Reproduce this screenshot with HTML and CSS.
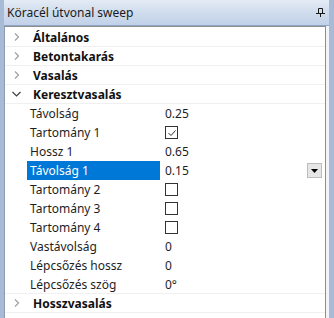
FILE: index.html
```html
<!DOCTYPE html>
<html lang="hu">
<head>
    <meta charset="UTF-8">
    <title>Köracél útvonal sweep</title>
    <link rel="stylesheet" href="styles.css">
</head>
<body>
    <div class="frame">
        <div class="titlebar">
            <span class="title">Köracél útvonal sweep</span>
            <svg class="pin" width="9" height="9" viewBox="0 0 9 9">
                <path d="M2.5 0.5h4v5h-4z M0 5.5h9 M4.5 5.5v3.5" fill="none" stroke="#1a1a1a" stroke-width="1"/>
            </svg>
        </div>
        <div class="panel">
            <div class="cat">
                <span class="chev"><svg width="8" height="8" viewBox="0 0 8 8"><path d="M2 0.5l3.5 3.5-3.5 3.5" fill="none" stroke="#a0a0a0" stroke-width="1.2"/></svg></span>
                <span class="cat-name">Általános</span>
            </div>
            <div class="cat">
                <span class="chev"><svg width="8" height="8" viewBox="0 0 8 8"><path d="M2 0.5l3.5 3.5-3.5 3.5" fill="none" stroke="#a0a0a0" stroke-width="1.2"/></svg></span>
                <span class="cat-name">Betontakarás</span>
            </div>
            <div class="cat">
                <span class="chev"><svg width="8" height="8" viewBox="0 0 8 8"><path d="M2 0.5l3.5 3.5-3.5 3.5" fill="none" stroke="#a0a0a0" stroke-width="1.2"/></svg></span>
                <span class="cat-name">Vasalás</span>
            </div>
            <div class="cat open">
                <span class="chev"><svg width="9" height="8" viewBox="0 0 9 8"><path d="M0.5 2l4 4 4-4" fill="none" stroke="#404040" stroke-width="1.2"/></svg></span>
                <span class="cat-name">Keresztvasalás</span>
            </div>

            <div class="prop"><span class="name">Távolság</span><span class="value">0.25</span></div>
            <div class="prop"><span class="name">Tartomány 1</span><span class="value"><span class="check"><svg width="10" height="10" viewBox="0 0 10 10"><path d="M1.5 5l2.5 2.5 4.5-5" fill="none" stroke="#333" stroke-width="1"/></svg></span></span></div>
            <div class="prop"><span class="name">Hossz 1</span><span class="value">0.65</span></div>
            <div class="prop selected"><span class="name">Távolság 1</span><span class="value">0.15<span class="drop"><svg width="7" height="4" viewBox="0 0 7 4"><path d="M0 0h7l-3.5 4z" fill="#000"/></svg></span></span></div>
            <div class="prop"><span class="name">Tartomány 2</span><span class="value"><span class="check"></span></span></div>
            <div class="prop"><span class="name">Tartomány 3</span><span class="value"><span class="check"></span></span></div>
            <div class="prop"><span class="name">Tartomány 4</span><span class="value"><span class="check"></span></span></div>
            <div class="prop"><span class="name">Vastávolság</span><span class="value">0</span></div>
            <div class="prop"><span class="name">Lépcsőzés hossz</span><span class="value">0</span></div>
            <div class="prop last"><span class="name">Lépcsőzés szög</span><span class="value">0°</span></div>

            <div class="cat">
                <span class="chev"><svg width="8" height="8" viewBox="0 0 8 8"><path d="M2 0.5l3.5 3.5-3.5 3.5" fill="none" stroke="#a0a0a0" stroke-width="1.2"/></svg></span>
                <span class="cat-name">Hosszvasalás</span>
            </div>
        </div>
    </div>
</body>
</html>
```

FILE: styles.css
```css
* {
    margin: 0;
    padding: 0;
    box-sizing: border-box;
}

body {
    width: 334px;
    height: 318px;
    overflow: hidden;
    background-color: #a7bbd6;
    font-family: 'Noto Sans', 'Open Sans', sans-serif;
    font-size: 12px;
    color: #1e1e1e;
}

.frame {
    display: flex;
    flex-direction: column;
    height: 318px;
    margin: 0 5px 0 4px;
    background-color: #f2f4f7;
}

.titlebar {
    height: 26px;
    display: flex;
    align-items: center;
    justify-content: space-between;
    padding: 0 4px 0 3px;
    background: linear-gradient(to bottom, #e3ebf5 0%, #d2deee 45%, #c1d1e8 100%);
    border-bottom: 1px solid #8fa6c6;
}

.title {
    color: #1b1b1b;
    line-height: 1;
}

.pin {
    margin-bottom: 1px;
}

.panel {
    flex: 1;
    margin-right: 3px;
    padding-top: 1px;
    background-color: white;
    border-left: 1px solid #8c9bb0;
    border-right: 1px solid #8e8e8e;
    border-top: 1px solid #8e8e8e;
}

.cat {
    height: 19px;
    display: flex;
    align-items: center;
    border-bottom: 1px solid #f0f0f0;
}

.chev {
    width: 22px;
    display: flex;
    justify-content: center;
    padding-left: 1px;
}

.cat-name {
    padding-left: 6px;
    font-weight: bold;
    color: #111;
}

.prop {
    height: 19px;
    display: flex;
    align-items: center;
    padding-left: 22px;
}

.prop.last {
    border-bottom: 1px solid #f0f0f0;
}

.name {
    width: 133px;
    height: 100%;
    display: flex;
    align-items: center;
    padding-left: 3px;
}

.value {
    flex: 1;
    display: flex;
    align-items: center;
    padding-left: 5px;
}

.prop.selected .name {
    background-color: #0078d7;
    color: white;
}

.check {
    width: 13px;
    height: 13px;
    border: 1px solid #333;
    display: flex;
    align-items: center;
    justify-content: center;
}

.drop {
    margin-left: auto;
    margin-right: 3px;
    width: 15px;
    height: 15px;
    display: flex;
    align-items: center;
    justify-content: center;
    background-color: #e6e6e6;
    border: 1px solid #bcbcbc;
}
```
